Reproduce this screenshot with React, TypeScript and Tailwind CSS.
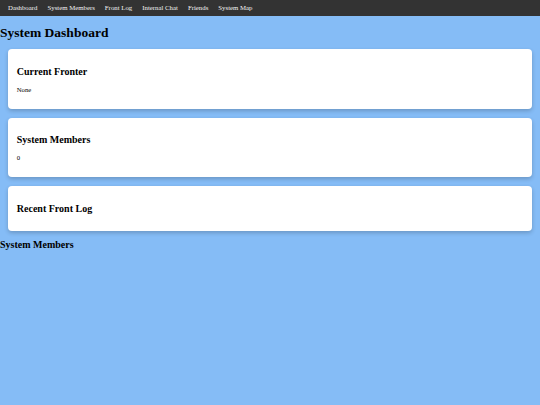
export default function App() {
  const navItems = ["Dashboard", "System Members", "Front Log", "Internal Chat", "Friends", "System Map"];
  const serif = { fontFamily: '"Liberation Serif", "Times New Roman", serif' };
  return (
    <div className="min-h-[405px] bg-[#85bcf6] text-black flow-root" style={serif}>
      <nav className="h-[16px] bg-[#333333] flex items-center pl-[8px] gap-[10px]">
        {navItems.map((n) => (
          <span key={n} className="text-[6.8px] leading-none text-[#f2f2f2] whitespace-nowrap">{n}</span>
        ))}
      </nav>
      <h1 className="text-[13.5px] font-bold leading-[15.4px] my-[9px]">System Dashboard</h1>
      <div className="flex flex-col gap-[9px] mx-[8.4px]">
        <section className="bg-white rounded-[4px] shadow-[0_2px_4px_rgba(0,0,0,0.2)] p-[8.4px]">
          <h2 className="text-[10px] font-bold leading-[11.5px] mt-[8.3px] mb-[8.3px]">Current Fronter</h2>
          <p className="text-[6.7px] leading-[7.7px] mb-[6.7px]">None</p>
        </section>
        <section className="bg-white rounded-[4px] shadow-[0_2px_4px_rgba(0,0,0,0.2)] p-[8.4px]">
          <h2 className="text-[10px] font-bold leading-[11.5px] mt-[8.3px] mb-[8.3px]">System Members</h2>
          <p className="text-[6.7px] leading-[7.7px] mb-[6.7px]">0</p>
        </section>
        <section className="bg-white rounded-[4px] shadow-[0_2px_4px_rgba(0,0,0,0.2)] p-[8.4px]">
          <h2 className="text-[10px] font-bold leading-[11.5px] my-[8.3px]">Recent Front Log</h2>
        </section>
      </div>
      <h2 className="text-[10px] font-bold leading-[11.5px] mt-[8.4px]">System Members</h2>
    </div>
  );
}
